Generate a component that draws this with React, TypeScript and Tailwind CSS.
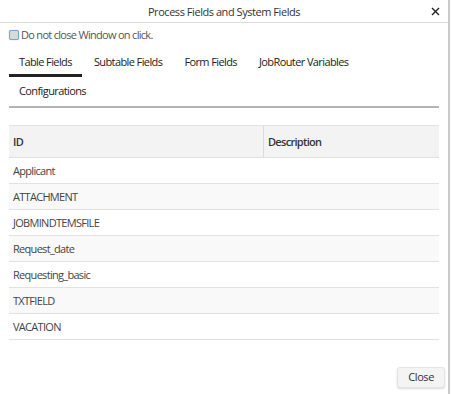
import { useState } from "react";

// ─── Data ─────────────────────────────────────────────────────────────────────

const tabs = ["Table Fields", "Subtable Fields", "Form Fields", "JobRouter Variables", "Configurations"];

const fields = [
  "Applicant",
  "ATTACHMENT",
  "JOBMINDTEMSFILE",
  "Request_date",
  "Requesting_basic",
  "TXTFIELD",
  "VACATION",
];

// ─── Page ─────────────────────────────────────────────────────────────────────

export default function App() {
  const [active, setActive] = useState(0);
  const [keepOpen, setKeepOpen] = useState(false);

  return (
    <div
      className="w-[451px] h-[394px] bg-white text-[#333] overflow-hidden tracking-[-0.7px]"
      style={{ fontFamily: '"Open Sans", "Noto Sans", sans-serif' }}
    >
      <div className="w-[450px] h-full border-r-2 border-[#c9c9c9] flex flex-col">
        {/* Header */}
        <div className="h-[23px] border-b border-[#dcdcdc] flex items-center relative shrink-0">
          <p className="flex-1 text-center text-[11px] leading-none text-[#333] tracking-[-0.45px]">
            Process Fields and System Fields
          </p>
          <button className="absolute right-[6px] top-[4px] w-[14px] h-[14px] flex items-center justify-center text-[#222]">
            <svg width="9" height="9" viewBox="0 0 9 9">
              <path d="M1 1L8 8M8 1L1 8" stroke="currentColor" strokeWidth="1.4" />
            </svg>
          </button>
        </div>

        <div className="flex-1 flex flex-col pl-[9px] pr-[9px]">
          {/* Keep open */}
          <label className="mt-[6px] flex items-center gap-[2px] text-[11px] leading-none text-[#555] cursor-pointer">
            <span
              onClick={() => setKeepOpen(!keepOpen)}
              className="w-[10px] h-[10px] rounded-[2px] border border-[#7aa3dc] bg-[#d9d9d9] shadow-[0_0_1px_#7aa3dc] shrink-0"
            />
            Do not close Window on click.
          </label>

          {/* Tabs */}
          <div className="mt-[8px] flex flex-wrap gap-x-[2px] border-b-2 border-[#b4b4b4] w-[430px]">
            {tabs.map((t, i) => (
              <button
                key={t}
                onClick={() => setActive(i)}
                className={`h-[29px] px-[10px] text-[11px] leading-none text-[#222] tracking-[-0.6px] border-b-[3px] ${
                  active === i ? "border-[#222]" : "border-transparent"
                }`}
              >
                {t}
              </button>
            ))}
          </div>

          {/* Table */}
          <div className="mt-[17px] w-[430px] text-[11px] leading-none">
            <div className="h-[33px] flex bg-[#f3f3f3] border-t border-b border-[#e2e2e2]">
              <div className="w-[255px] border-r border-[#dcdcdc] flex items-center pl-[4px] font-semibold text-[#333]">
                ID
              </div>
              <div className="flex-1 flex items-center pl-[4px] font-semibold text-[#333]">Description</div>
            </div>
            {fields.map((f, i) => (
              <div
                key={f}
                className={`h-[26px] flex items-center pl-[4px] border-b border-[#e2e2e2] text-[#444] ${
                  i % 2 ? "bg-[#f9f9f9]" : "bg-white"
                }`}
              >
                {f}
              </div>
            ))}
          </div>

          {/* Footer */}
          <div className="mt-auto mb-[6px] flex justify-end -mr-[6px]">
            <button className="h-[21px] px-[10px] rounded-[3px] bg-[#f4f4f4] border border-[#e4e4e4] shadow-[0_1px_2px_rgba(0,0,0,0.15)] text-[11px] text-[#333] tracking-[-0.4px]">
              Close
            </button>
          </div>
        </div>
      </div>
    </div>
  );
}
